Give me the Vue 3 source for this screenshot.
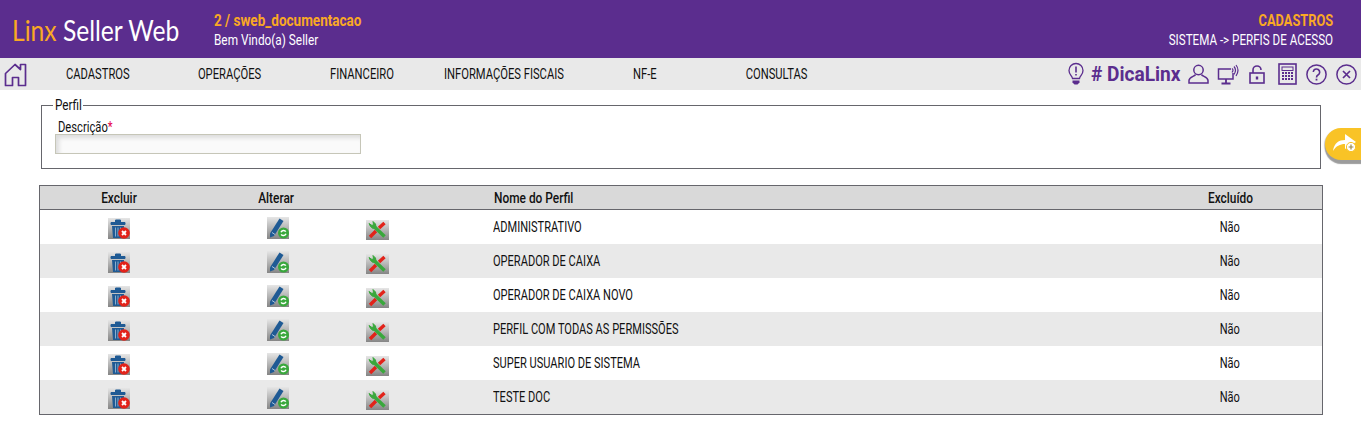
<script setup>
const menu = ['CADASTROS', 'OPERAÇÕES', 'FINANCEIRO', 'INFORMAÇÕES FISCAIS', 'NF-E', 'CONSULTAS']
const rows = [
  'ADMINISTRATIVO',
  'OPERADOR DE CAIXA',
  'OPERADOR DE CAIXA NOVO',
  'PERFIL COM TODAS AS PERMISSÕES',
  'SUPER USUARIO DE SISTEMA',
  'TESTE DOC',
]
</script>

<template>
  <div class="page">
    <header class="top">
      <div class="logo"><span class="logo-in"><span class="orange">Linx</span> Seller Web</span></div>
      <div class="who">
        <div class="base"><span>2 / sweb_documentacao</span></div>
        <div class="hello"><span>Bem Vindo(a) Seller</span></div>
      </div>
      <div class="crumb">
        <div class="crumb-a"><span>CADASTROS</span></div>
        <div class="crumb-b"><span>SISTEMA -&gt; PERFIS DE ACESSO</span></div>
      </div>
    </header>

    <nav class="bar">
      <svg class="home" width="24" height="25" viewBox="0 0 24 25" fill="none">
        <path d="M1.5 23.5V11.5L11 2.5L16.5 7.5V2.5H21.5V23.5H14.5V15.5H8.5V23.5Z" stroke="#5b2d8e" stroke-width="1.7" stroke-linejoin="round" />
      </svg>
      <div class="menu">
        <div v-for="m in menu" :key="m" class="item"><span>{{ m }}</span></div>
      </div>
      <div class="tools">
        <svg class="t-bulb" width="18" height="24" viewBox="0 0 18 24" fill="none" stroke="#5b2d8e" stroke-width="1.3">
          <path d="M5.5 16.5C5 13.5 2 12.5 2 8.5A7 7 0 0 1 16 8.5C16 12.5 13 13.5 12.5 16.5Z" />
          <path d="M9 4.5V10.5M9 12V13.5" stroke-width="1.6" />
          <path d="M5.5 18.5H12.5V20.5L10.5 22.5H7.5L5.5 20.5Z" fill="#5b2d8e" stroke="none" />
        </svg>
        <span class="dica"><span>#&nbsp;DicaLinx</span></span>
        <svg class="t-user" width="21" height="20" viewBox="0 0 21 20" fill="none" stroke="#5b2d8e" stroke-width="1.5">
          <circle cx="10.5" cy="6" r="4.7" />
          <path d="M7.5 10.5C7 12.5 1 12.5 1 16.5V19H20V16.5C20 12.5 14 12.5 13.5 10.5" />
        </svg>
        <svg class="t-mon" width="22" height="21" viewBox="0 0 22 21" fill="none" stroke="#5b2d8e" stroke-width="1.5">
          <path d="M14 5H1.5V15H16V9" />
          <path d="M9 15V19M4.5 19.5H13.5" stroke-width="1.8" />
          <path d="M15 4.5Q17 6 15 8.5M17 2.5Q20 6 17 10.5M19 1Q23 6 19 12" stroke-width="1.2" />
        </svg>
        <svg class="t-lock" width="16" height="19" viewBox="0 0 16 19" fill="none" stroke="#5b2d8e" stroke-width="1.6">
          <path d="M4 8V5A4 4 0 0 1 12 5" />
          <rect x="1" y="8" width="14" height="10" />
          <path d="M8 11.5V14.5" stroke-width="2.4" />
        </svg>
        <svg class="t-calc" width="19" height="22" viewBox="0 0 19 22" fill="none" stroke="#5b2d8e">
          <rect x="1" y="1" width="17" height="20" stroke-width="1.6" />
          <rect x="4" y="4" width="11" height="3.5" stroke-width="1" />
          <path d="M4 10H15M4 13H15M4 16H15" stroke-width="1.8" stroke-dasharray="2 1" />
        </svg>
        <svg class="t-help" width="21" height="21" viewBox="0 0 21 21" fill="none" stroke="#5b2d8e" stroke-width="1.5">
          <circle cx="10.5" cy="10.5" r="9.6" />
          <path d="M7.3 8A3.2 3.2 0 1 1 12 11C10.8 11.7 10.5 12.3 10.5 13.5" stroke-width="1.6" />
          <path d="M10.5 14.7V16.5" stroke-width="1.8" />
        </svg>
        <svg class="t-close" width="21" height="21" viewBox="0 0 21 21" fill="none" stroke="#5b2d8e" stroke-width="1.5">
          <circle cx="10.5" cy="10.5" r="9.6" />
          <path d="M7 7L14 14M14 7L7 14" stroke-width="1.7" />
        </svg>
      </div>
    </nav>

    <main class="content">
      <fieldset class="filter">
        <legend><span>Perfil</span></legend>
        <label class="lbl"><span>Descrição<b class="req">*</b></span></label>
        <div class="field"></div>
      </fieldset>

      <table class="grid">
        <colgroup>
          <col class="c1" /><col class="c2" /><col class="c3" /><col /><col class="c5" />
        </colgroup>
        <thead>
          <tr>
            <th><span>Excluir</span></th>
            <th><span>Alterar</span></th>
            <th></th>
            <th class="name"><span class="wide">Nome do Perfil</span></th>
            <th><span>Excluído</span></th>
          </tr>
        </thead>
        <tbody>
          <tr v-for="r in rows" :key="r">
            <td>
              <svg class="ico ico1" width="22" height="21" viewBox="0 0 22 21">
                <path d="M3 4.5H17V6.5H3ZM7.5 4.5V2H12.5V4.5" fill="#1f5a94" stroke="#1f5a94" stroke-width="1" fill-rule="evenodd" />
                <path d="M4 8H16L15 20H5Z" fill="#1f5a94" />
                <path d="M7.5 9.5V18.5M10 9.5V18.5M12.5 9.5V18.5" stroke="#a9c4dc" stroke-width="0.8" />
                <circle cx="16" cy="15" r="5.8" fill="#e2231a" />
                <path d="M14 13L18 17M18 13L14 17" stroke="#fff" stroke-width="1.8" />
              </svg>
            </td>
            <td>
              <svg class="ico" width="22" height="22" viewBox="0 0 22 22">
                <path d="M3 16.5L12.5 1.5L16.5 4L7 19L3 20.5Z" fill="#1f5a94" />
                <path d="M5 15.5L8 17.5" stroke="#a9c4dc" stroke-width="1" />
                <circle cx="16.5" cy="16" r="5.5" fill="#39a83c" />
                <path d="M14 15.2A2.7 2.7 0 0 1 18.8 14.7M19 16.8A2.7 2.7 0 0 1 14.2 17.3" fill="none" stroke="#fff" stroke-width="1.5" />
              </svg>
            </td>
            <td>
              <svg class="ico ico3" width="23" height="20" viewBox="0 0 23 20">
                <path d="M4 17L10 11M13 8L18.5 3" stroke="#e2231a" stroke-width="3.4" />
                <path d="M7 5.5L18.5 16.5" stroke="#39a83c" stroke-width="3.6" />
                <path d="M3 3.5L4.5 6.5L7 8.5L10 7L9.5 4L7 1.5L7.5 4.5L6 5.5Z" fill="#39a83c" stroke="#39a83c" stroke-width="1" />
              </svg>
            </td>
            <td class="name"><span>{{ r }}</span></td>
            <td><span>Não</span></td>
          </tr>
        </tbody>
      </table>
    </main>

    <button class="side" type="button" aria-label="Adicionar">
      <svg width="30" height="24" viewBox="0 0 30 24">
        <path d="M3 19C4 11 9 8 15 8V2L26 10L15 17V12C10 12 6 14 3 19Z" fill="#fff" />
        <circle cx="21" cy="15" r="4.6" fill="#fff" stroke="#f9c326" stroke-width="1" />
        <path d="M18.6 15H23.4M21 12.6V17.4" stroke="#9a8a50" stroke-width="1.2" />
      </svg>
    </button>
  </div>
</template>

<style scoped>
.page {
  position: relative;
  width: 1361px;
  height: 441px;
  overflow: hidden;
  background: #fff;
  font-family: "Roboto", "Liberation Sans", sans-serif;
  color: #111;
  font-size: 14px;
}
.page span {
  display: inline-block;
  white-space: nowrap;
}
.top {
  display: flex;
  height: 58px;
  background: #5b2d8e;
  color: #fff;
  box-sizing: border-box;
  padding: 0 28px 0 12px;
}
.logo {
  width: 202px;
  font-family: "Lato", sans-serif;
  font-weight: 400;
  font-size: 28px;
  line-height: 61px;
}
.page .logo-in {
  transform: scaleX(0.88);
  transform-origin: left center;
}
.page .orange {
  color: #f9a825;
}
.who {
  padding-top: 12px;
}
.base {
  color: #f9a825;
  font-size: 16px;
  font-weight: 700;
  line-height: 18px;
}
.base span {
  transform: scaleX(0.845);
  transform-origin: left center;
}
.hello {
  line-height: 18px;
  margin-top: 1px;
}
.hello span {
  transform: scaleX(0.845);
  transform-origin: left center;
}
.crumb {
  margin-left: auto;
  text-align: right;
  padding-top: 12px;
}
.crumb-a {
  color: #f9a825;
  font-size: 16px;
  font-weight: 700;
  line-height: 18px;
}
.crumb-a span {
  transform: scaleX(0.8);
  transform-origin: right center;
}
.crumb-b {
  line-height: 18px;
  margin-top: 1px;
}
.crumb-b span {
  transform: scaleX(0.83);
  transform-origin: right center;
}
.bar {
  display: flex;
  align-items: center;
  height: 32px;
  background: #e9e9e9;
}
.home {
  margin: 0 4px;
  flex: none;
}
.menu {
  display: grid;
  grid-template-columns: 132px 132px 132px 151px 132px 132px;
}
.item {
  display: flex;
  justify-content: center;
  color: #111;
}
.item span {
  transform: scaleX(0.8);
  flex: none;
}
.tools {
  display: flex;
  align-items: center;
  margin-left: auto;
  padding-right: 4px;
}
.dica {
  width: 91px;
  margin: 0 6px 0 6px;
  color: #5b2d8e;
  font-weight: 700;
  font-size: 21px;
}
.dica span {
  transform: scaleX(0.91);
  transform-origin: left center;
}
.t-mon { margin-left: 8px; }
.t-lock { margin-left: 10px; }
.t-calc { margin-left: 13px; }
.t-help { margin-left: 9px; }
.t-close { margin-left: 9px; }
.content {
  padding: 8px 38px 0 39px;
}
.filter {
  box-sizing: border-box;
  width: 1280px;
  height: 71px;
  margin: 0 0 16px 2px;
  padding: 0 0 0 13px;
  border: 1px solid #66666c;
}
legend {
  box-sizing: border-box;
  width: 30px;
  padding: 0 2px;
  margin-left: -2px;
  line-height: 15px;
}
legend span {
  transform: scaleX(0.84);
  transform-origin: left center;
}
.lbl {
  display: block;
  margin: 6px 0 0 3px;
  line-height: 16px;
}
.lbl span {
  transform: scaleX(0.8);
  transform-origin: left center;
}
.req {
  color: #e6004c;
  font-weight: 400;
}
.field {
  box-sizing: border-box;
  width: 306px;
  height: 20px;
  margin-top: -1px;
  border: 1px solid #c6c6b8;
  background: #fafafa;
  box-shadow: inset 3px 3px 4px #dcdcdc;
}
.grid {
  width: 1284px;
  table-layout: fixed;
  border-collapse: collapse;
  border: 1px solid #66666c;
}
.c1, .c2 { width: 158px; }
.c3 { width: 42px; }
.c5 { width: 184px; }
th {
  height: 23px;
  padding: 0;
  background: #d9d9d9;
  border-bottom: 1px solid #66666c;
  font-weight: 500;
  text-align: center;
}
th span {
  transform: scaleX(0.85);
}
th .wide {
  transform-origin: left center;
}
td {
  height: 34px;
  padding: 0;
  text-align: center;
}
td span {
  transform: scaleX(0.79);
}
tbody tr:nth-child(even) td {
  background: #e9e9e9;
}
.name {
  text-align: left;
  padding-left: 95px;
}
td.name span {
  transform-origin: left center;
}
th.name {
  padding-left: 96px;
}
.ico {
  display: block;
  margin: 0 auto;
  background: linear-gradient(#e6e6e6, #858585);
  transform: translate(1px, 1px);
}
.ico1 {
  transform: translate(0, 1px);
}
.ico3 {
  transform: translate(1px, 3px);
}
.side {
  position: absolute;
  left: 1325px;
  top: 128px;
  display: flex;
  align-items: center;
  width: 60px;
  height: 32px;
  padding: 0 0 0 5px;
  border: 0;
  border-radius: 16px;
  background: #f9c326;
  box-shadow: 0 4px 1px #9c9c9c, -1px 1px 1px #c8c8c8;
}
</style>
